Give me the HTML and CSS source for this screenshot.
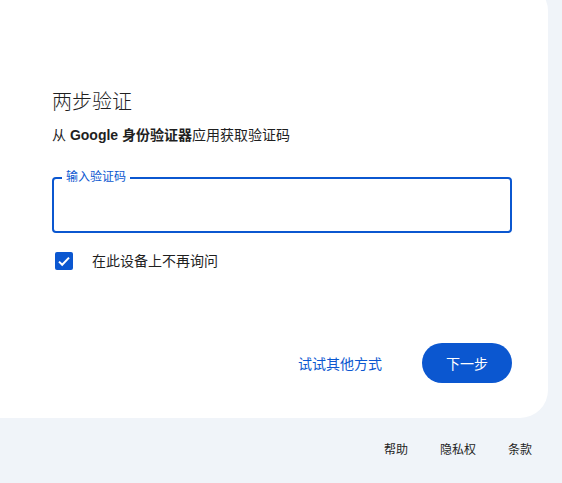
FILE: index.html
```html
<!DOCTYPE html>
<html lang="zh-CN">
<head>
<meta charset="utf-8">
<title>两步验证</title>
<link rel="stylesheet" href="styles.css">
</head>
<body>
<main class="card">
  <h1 class="title">两步验证</h1>
  <p class="subtitle">从 <b>Google 身份验证器</b>应用获取验证码</p>
  <div class="field">
    <span class="field-label">输入验证码</span>
    <input class="field-input" type="text" aria-label="输入验证码">
  </div>
  <label class="check-row">
    <span class="checkbox">
      <svg width="18" height="18" viewBox="0 0 18 18"><path d="M4 9.6 L7.2 12.8 L14 5.6" fill="none" stroke="#fff" stroke-width="2"/></svg>
    </span>
    <span class="check-label">在此设备上不再询问</span>
  </label>
  <div class="actions">
    <a class="text-btn">试试其他方式</a>
    <button class="primary-btn">下一步</button>
  </div>
</main>
<footer class="footer">
  <a class="footer-link">帮助</a>
  <a class="footer-link">隐私权</a>
  <a class="footer-link">条款</a>
</footer>
</body>
</html>
```
FILE: styles.css
```css
* { box-sizing: border-box; }
html, body {
  margin: 0;
  background: #f0f4f9;
  font-family: "Liberation Sans", "Noto Sans CJK SC", sans-serif;
  color: #1f1f1f;
  overflow: hidden;
}
.card {
  background: #fff;
  border-radius: 28px;
  margin: -17px 14px 0 -28px;
  padding: 105px 36px 35px 80px;
  display: flex;
  flex-direction: column;
}
.title {
  margin: 0;
  font-size: 20px;
  line-height: 28px;
  font-weight: 300;
}
.subtitle {
  margin: 8px 0 0;
  font-size: 14px;
  line-height: 22px;
}
.subtitle b { font-weight: 700; }
.field {
  position: relative;
  margin-top: 31px;
  height: 56px;
  border: 2px solid #0b57d0;
  border-radius: 4px;
}
.field-label {
  position: absolute;
  left: 8px;
  top: -10px;
  padding: 0 4px;
  background: #fff;
  color: #0b57d0;
  font-size: 12px;
  line-height: 16px;
}
.field-input {
  width: 100%;
  height: 100%;
  border: 0;
  outline: 0;
  background: transparent;
  padding: 0 14px;
  font: inherit;
}
.check-row {
  margin-top: 18px;
  display: flex;
  align-items: center;
  height: 20px;
  padding-left: 3px;
}
.checkbox {
  width: 18px;
  height: 18px;
  border-radius: 2px;
  background: #0b57d0;
  display: flex;
}
.check-label {
  margin-left: 19px;
  font-size: 14px;
  line-height: 20px;
}
.actions {
  margin-top: 72px;
  display: flex;
  justify-content: flex-end;
  align-items: center;
  gap: 40px;
}
.text-btn {
  color: #0b57d0;
  font-size: 14px;
  line-height: 20px;
  margin-top: 2px;
}
.primary-btn {
  width: 90px;
  height: 40px;
  border: 0;
  border-radius: 20px;
  background: #0b57d0;
  color: #fff;
  font: inherit;
  font-size: 14px;
}
.footer {
  display: flex;
  justify-content: flex-end;
  margin-top: 24px;
  padding-right: 14px;
}
.footer-link {
  padding: 0 16px;
  font-size: 12px;
  line-height: 16px;
  color: #1f1f1f;
}
```
